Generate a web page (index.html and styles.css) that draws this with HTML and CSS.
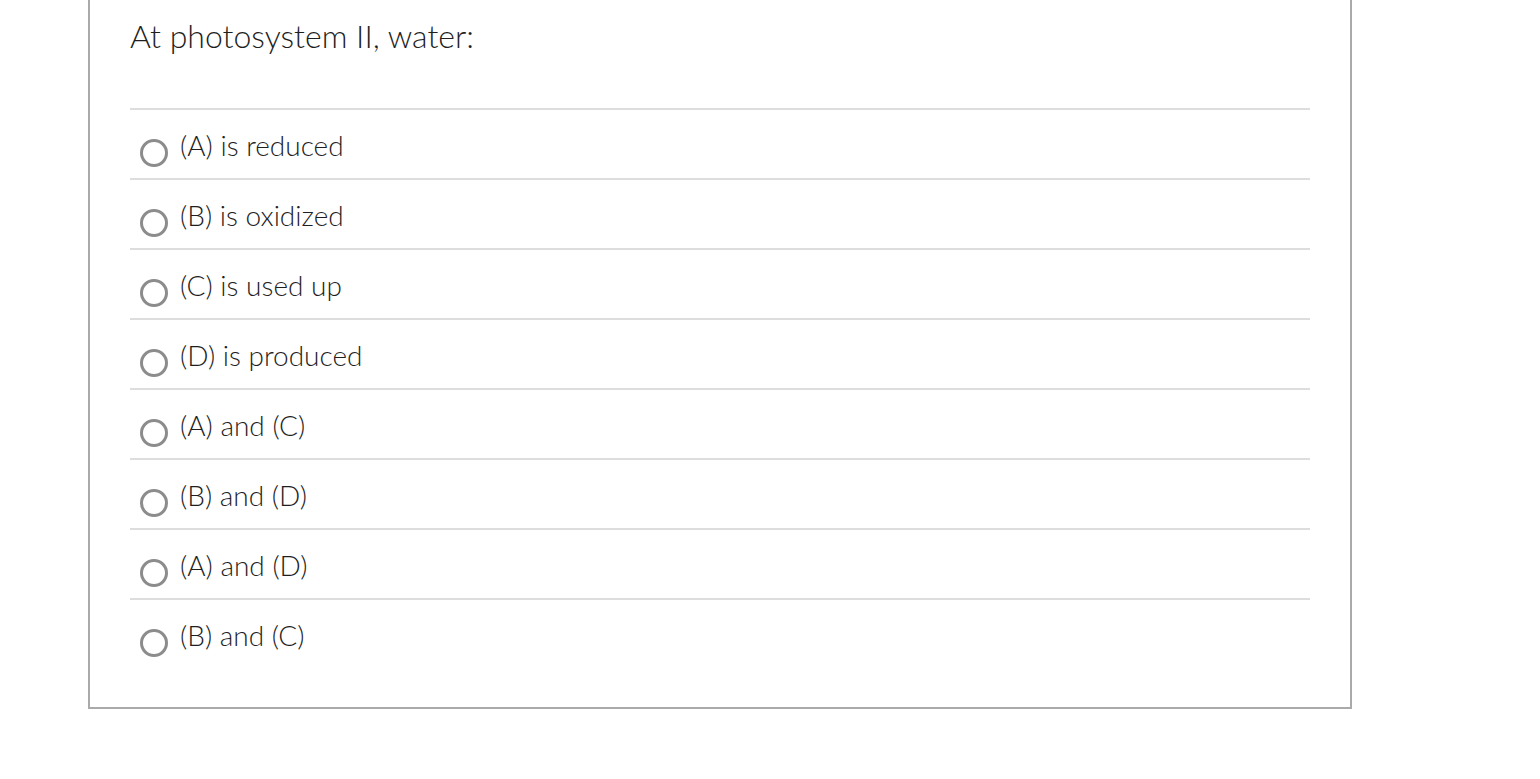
FILE: index.html
```html
<!DOCTYPE html>
<html lang="en">
<head>
<meta charset="utf-8">
<title>Question</title>
<link rel="stylesheet" href="styles.css">
</head>
<body>
<div class="question">
  <div class="question-text">At photosystem II, water:</div>
  <div class="answers">
    <label class="answer"><span class="radio"></span><span class="answer-text">(A) is reduced</span></label>
    <label class="answer"><span class="radio"></span><span class="answer-text">(B) is oxidized</span></label>
    <label class="answer"><span class="radio"></span><span class="answer-text">(C) is used up</span></label>
    <label class="answer"><span class="radio"></span><span class="answer-text">(D) is produced</span></label>
    <label class="answer"><span class="radio"></span><span class="answer-text">(A) and (C)</span></label>
    <label class="answer"><span class="radio"></span><span class="answer-text">(B) and (D)</span></label>
    <label class="answer"><span class="radio"></span><span class="answer-text">(A) and (D)</span></label>
    <label class="answer"><span class="radio"></span><span class="answer-text">(B) and (C)</span></label>
  </div>
</div>
</body>
</html>
```

FILE: styles.css
```css
html, body {
  margin: 0;
  padding: 0;
  background: #ffffff;
}

body {
  font-family: "Lato", "Liberation Sans", sans-serif;
  color: #1f1f1f;
}

.question {
  margin-left: 88px;
  width: 1180px;
  border: 2px solid #aaaaaa;
  border-top: 0;
  padding: 18px 40px 39px 40px;
}

.question-text {
  font-size: 32px;
  font-weight: 300;
  line-height: 36px;
  margin-bottom: 54px;
}

.answers {
  display: flex;
  flex-direction: column;
}

.answer {
  display: flex;
  align-items: flex-start;
  height: 68px;
  border-top: 2px solid #dddddd;
}

.radio {
  box-sizing: border-box;
  width: 28px;
  height: 28px;
  margin-top: 29px;
  margin-left: 10px;
  margin-right: 12px;
  border: 3px solid #8c8c8c;
  border-radius: 50%;
  flex: none;
}

.answer-text {
  font-size: 28px;
  font-weight: 300;
  line-height: 31px;
  margin-top: 20px;
}
```
